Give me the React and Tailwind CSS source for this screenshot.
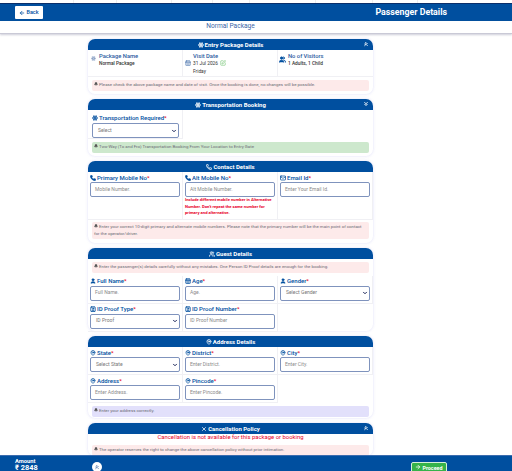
import React from 'react';
import { ArrowLeft, ArrowRight, Bell, CalendarDays, ChevronDown, ChevronsDown, ChevronsUp, Contact, Mail, MapPin, Phone, Snowflake, SquarePen, User, Users, X } from 'lucide-react';

const BLUE = 'bg-[#004f9f]';

const topLines = [74, 43, 55, 41, 37, 66, 57, 45];

const Alert = ({ tone = 'bg-[#fdeaea]', children }) => (
  <div className={`mx-[4px] mt-[3px] px-[2px] py-[2px] rounded-[2px] ${tone} text-[#6b6b75] text-[4.4px] leading-[6.5px] flex-none`}>
    <Bell size={4} className="inline mr-[1px] -mt-[1px] fill-[#555] text-[#555]" />
    {children}
  </div>
);

const Card = ({ title, icon: Icon, caret: Caret, className = '', children }) => (
  <section className={`bg-white rounded-[7px] shadow-[0_0_3px_rgba(100,100,220,0.22)] flex flex-col ${className}`}>
    <div className={`relative h-[11px] flex-none ${BLUE} rounded-t-[7px] flex items-center justify-center gap-[1px] text-white text-[6px] font-bold`}>
      <Icon size={6} strokeWidth={3} />
      {title}
      {Caret && <Caret size={6} strokeWidth={4} className="absolute right-[4px] top-[2px]" />}
    </div>
    {children}
  </section>
);

const Label = ({ icon: Icon, fill, children }) => (
  <div className="h-[9px] mt-[1px] flex items-center gap-[1px] text-[#004f9f] text-[6px] font-medium leading-none whitespace-nowrap">
    <Icon size={6} strokeWidth={3} className={`flex-none ${fill ? 'fill-[#004f9f]' : ''}`} />
    <span>{children}<span className="text-[#e8002a]">*</span></span>
  </div>
);

const Input = ({ placeholder }) => (
  <div className="h-[15px] border border-[#7f93bd] rounded-[2px] flex items-center px-[4px] text-[#8b8b8b] text-[5px] bg-white">
    {placeholder}
  </div>
);

const Select = ({ value }) => (
  <div className="h-[15px] border border-[#7f93bd] rounded-[2px] flex items-center justify-between pl-[5px] pr-[1px] text-[#777] text-[5px] bg-white">
    {value}
    <ChevronDown size={6} strokeWidth={4} className="text-[#1b2559]" />
  </div>
);

const Cell = ({ children, className = '' }) => (
  <div className={`px-[2px] pb-[2px] border-r border-b border-[#f0f0f4] ${className}`}>{children}</div>
);

const Field = ({ icon, fill, label, placeholder, select }) => (
  <Cell>
    <Label icon={icon} fill={fill}>{label}</Label>
    {select ? <Select value={placeholder} /> : <Input placeholder={placeholder} />}
  </Cell>
);

export default function App() {
  return (
    <div className="relative h-[471px] w-[512px] overflow-hidden bg-white font-['Roboto',sans-serif]">
      {/* table rules left above the header */}
      <div className="h-[3px] flex">
        {topLines.map((w, i) => (
          <div key={i} className="border-r border-[#eeeeee]" style={{ width: w }} />
        ))}
      </div>

      <header className={`h-[18px] ${BLUE} border-t border-[#0a2f6b] flex items-center justify-between pl-[15px]`}>
        <button className="h-[13px] w-[28px] bg-white rounded-[1px] flex items-center justify-center gap-[1px] text-[#004f9f] text-[5.5px] font-medium">
          <ArrowLeft size={6} strokeWidth={3} /> Back
        </button>
        <h1 className="mr-[65px] text-white text-[8.8px] font-bold">Passenger Details</h1>
      </header>

      <div className="h-[13px] pr-[51px] border-b border-[#c9c9d6] shadow-[0_1px_2px_rgba(90,90,130,0.3)] flex items-center justify-center text-[#3a66a8] text-[6.6px]">
        Normal Package
      </div>

      <main className="w-[285px] ml-[88px] mt-[5px] flex flex-col gap-[5px]">
        <Card title="Entry Package Details" icon={Snowflake} caret={ChevronsUp} className="h-[55px]">
          <div className="grid grid-cols-3 h-[27px] border-b border-[#f0f0f4] flex-none">
            <div className="flex items-start gap-[3px] pl-[3px] pt-[2px] border-r border-[#f0f0f4]">
              <Snowflake size={5} className="mt-[4px] text-[#5f7fb0] flex-none" />
              <div>
                <div className="text-[#2a5a9e] text-[5.8px] font-medium leading-[8px]">Package Name</div>
                <div className="text-[#333] text-[4.8px] leading-[8px] font-medium">Normal Package</div>
              </div>
            </div>
            <div className="flex items-start gap-[2px] pl-[2px] pt-[2px] border-r border-[#f0f0f4]">
              <CalendarDays size={6} className="mt-[8px] text-[#2a5a9e] flex-none" />
              <div>
                <div className="text-[#2a5a9e] text-[5.8px] font-medium leading-[8px]">Visit Date</div>
                <div className="flex items-center gap-[2px] text-[#333] text-[4.8px] leading-[8px]">
                  31 Jul 2026 <SquarePen size={6} className="text-[#5cb85c] -mt-[2px]" />
                </div>
                <div className="text-[#333] text-[4.8px] leading-[7px]">Friday</div>
              </div>
            </div>
            <div className="flex items-start gap-[2px] pl-[1px] pt-[2px]">
              <Users size={7} strokeWidth={3} className="mt-[4px] text-[#004f9f] fill-[#004f9f] flex-none" />
              <div>
                <div className="text-[#2a5a9e] text-[5.8px] font-medium leading-[8px]">No of Visitors</div>
                <div className="text-[#333] text-[4.8px] leading-[8px] font-medium">1 Adults, 1 Child</div>
              </div>
            </div>
          </div>
          <Alert>Please check the above package name and date of visit. Once the booking is done, no changes will be possible.</Alert>
        </Card>

        <Card title="Transportation Booking" icon={Snowflake} caret={ChevronsDown} className="h-[57px]">
          <div className="w-[95px] h-[29px] flex-none border-r border-b border-[#f0f0f4] pl-[4px] pr-[3px] pt-[2px]">
            <Label icon={Snowflake}>Transportation Required</Label>
            <div className="mt-[1px]"><Select value="Select" /></div>
          </div>
          <Alert tone="bg-[#cde8cd]">Two-Way (To and Fro) Transportation Booking From Your Location to Entry Gate</Alert>
        </Card>

        <Card title="Contact Details" icon={Phone} className="h-[82px]">
          <div className="grid grid-cols-3 h-[47px] flex-none">
            <Cell><Label icon={Phone} fill>Primary Mobile No</Label><Input placeholder="Mobile Number." /></Cell>
            <Cell>
              <Label icon={Phone} fill>Alt Mobile No</Label>
              <Input placeholder="Alt Mobile Number." />
              <p className="text-[#e8002a] text-[4.2px] leading-[6.5px] font-bold">
                Include different mobile number in Alternative Number. Don't repeat the same number for primary and alternative.
              </p>
            </Cell>
            <Cell><Label icon={Mail}>Email Id</Label><Input placeholder="Enter Your Email Id." /></Cell>
          </div>
          <Alert>Enter your correct 10-digit primary and alternate mobile numbers. Please note that the primary number will be the main point of contact for the operator/driver.</Alert>
        </Card>

        <Card title="Guest Details" icon={Users} className="h-[83px]">
          <Alert>Enter the passenger(s) details carefully without any mistakes. One Person ID Proof details are enough for the booking.</Alert>
          <div className="grid grid-cols-3 mt-[3px]">
            <Field icon={User} fill label="Full Name" placeholder="Full Name." />
            <Field icon={CalendarDays} label="Age" placeholder="Age." />
            <Field icon={User} fill label="Gender" placeholder="Select Gender" select />
            <Field icon={Contact} label="ID Proof Type" placeholder="ID Proof" select />
            <Field icon={Contact} label="ID Proof Number" placeholder="ID Proof Number" />
          </div>
        </Card>

        <Card title="Address Details" icon={MapPin} className="h-[82px]">
          <div className="grid grid-cols-3 flex-none">
            <Field icon={MapPin} label="State" placeholder="Select State" select />
            <Field icon={MapPin} label="District" placeholder="Enter District." />
            <Field icon={MapPin} label="City" placeholder="Enter City." />
            <Field icon={MapPin} label="Address" placeholder="Enter Address." />
            <Field icon={MapPin} label="Pincode" placeholder="Enter Pincode." />
          </div>
          <Alert tone="bg-[#e2e0fb]">Enter your address correctly.</Alert>
        </Card>

        <Card title="Cancellation Policy" icon={X} caret={ChevronsUp}>
          <div className="text-center text-[#e8002a] text-[5.9px] leading-[7px] mb-[1px]">
            Cancellation is not available for this package or booking
          </div>
          <Alert>The operator reserves the right to change the above cancellation policy without prior intimation.</Alert>
        </Card>
      </main>

      {/* fixed bottom bar */}
      <footer className={`absolute left-0 right-0 top-[455px] h-[16px] overflow-hidden ${BLUE} border-t border-[#3c6cae] text-white`}>
        <div className="absolute left-[15px] top-[2px] text-[5.8px] font-bold leading-[7px]">Amount</div>
        <div className="absolute left-[15px] top-[8px] text-[7.4px] font-bold leading-[7px]">₹ 2848</div>
        <div className="absolute left-[92px] top-[6px] w-[10px] h-[10px] rounded-full bg-white flex items-center justify-center text-[#2a5a9e]">
          <ChevronsUp size={6} strokeWidth={3} />
        </div>
        <button className="absolute left-[411px] top-[6px] h-[12px] w-[36px] bg-[#35b34a] border border-[#d6f0da] rounded-[2px] flex items-start pt-[1px] justify-center gap-[1px] text-white text-[5.4px] font-bold">
          <ArrowRight size={6} strokeWidth={3} /> Proceed
        </button>
      </footer>
    </div>
  );
}
